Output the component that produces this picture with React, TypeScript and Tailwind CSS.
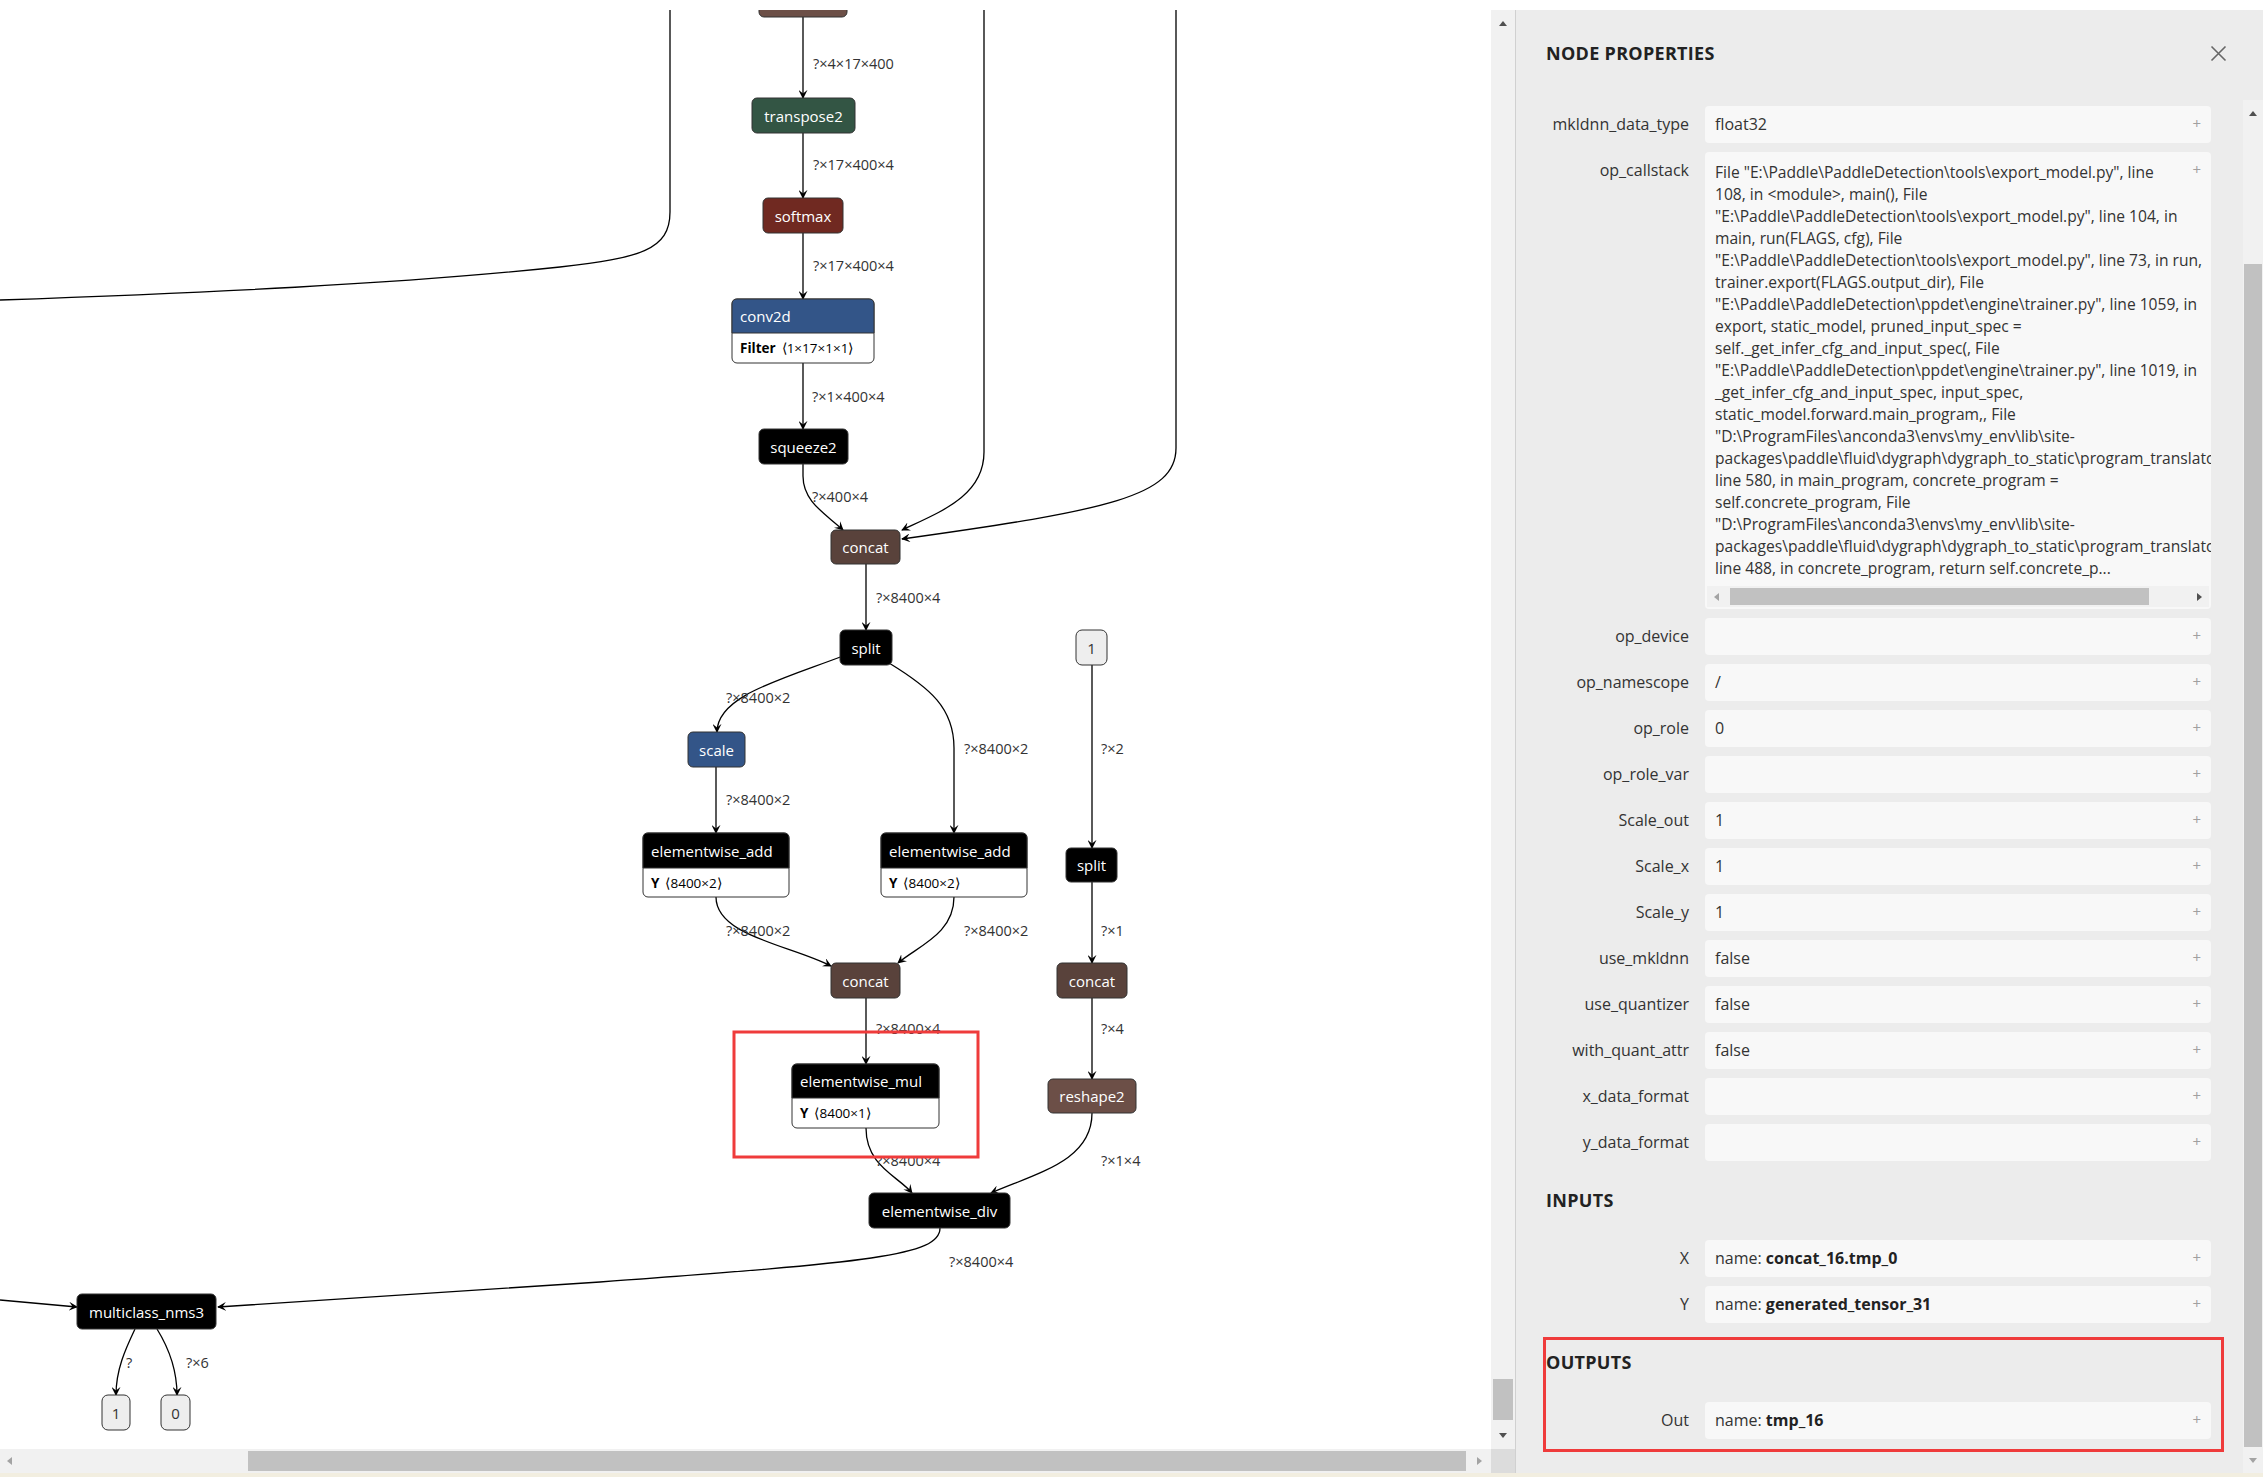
import React from "react";

// layout numbers are page pixels measured from the reference
type GNode = {
  x: number;
  y: number;
  w: number;
  h: number;
  label: string;
  fill: string;
  attr?: [string, string];
  bodyH?: number;
};

const NODES: GNode[] = [
  { x: 759, y: -20, w: 88, h: 37, label: "", fill: "#6c4f47" },
  { x: 752, y: 98, w: 103, h: 35, label: "transpose2", fill: "#335544" },
  { x: 763, y: 198, w: 80, h: 35, label: "softmax", fill: "#702921" },
  { x: 732, y: 299, w: 142, h: 34, label: "conv2d", fill: "#335588", attr: ["Filter", "⟨1×17×1×1⟩"], bodyH: 30 },
  { x: 759, y: 429, w: 89, h: 35, label: "squeeze2", fill: "#000000" },
  { x: 831, y: 530, w: 69, h: 34, label: "concat", fill: "#59423b" },
  { x: 840, y: 630, w: 52, h: 35, label: "split", fill: "#000000" },
  { x: 688, y: 732, w: 57, h: 35, label: "scale", fill: "#335588" },
  { x: 643, y: 833, w: 146, h: 35, label: "elementwise_add", fill: "#000000", attr: ["Y", "⟨8400×2⟩"], bodyH: 29 },
  { x: 881, y: 833, w: 146, h: 35, label: "elementwise_add", fill: "#000000", attr: ["Y", "⟨8400×2⟩"], bodyH: 29 },
  { x: 1066, y: 848, w: 51, h: 34, label: "split", fill: "#000000" },
  { x: 831, y: 963, w: 69, h: 35, label: "concat", fill: "#59423b" },
  { x: 1057, y: 963, w: 70, h: 35, label: "concat", fill: "#59423b" },
  { x: 792, y: 1064, w: 147, h: 34, label: "elementwise_mul", fill: "#000000", attr: ["Y", "⟨8400×1⟩"], bodyH: 30 },
  { x: 1048, y: 1079, w: 88, h: 34, label: "reshape2", fill: "#6c4f47" },
  { x: 869, y: 1193, w: 141, h: 35, label: "elementwise_div", fill: "#000000" },
  { x: 77, y: 1294, w: 139, h: 35, label: "multiclass_nms3", fill: "#000000" },
];

const CONSTS = [
  { x: 1076, y: 630, w: 31, h: 35, label: "1" },
  { x: 102, y: 1395, w: 28, h: 35, label: "1" },
  { x: 161, y: 1395, w: 29, h: 35, label: "0" },
];

const EDGES: { d: string; arrow?: boolean }[] = [
  { d: "M803 17 L803 98" },
  { d: "M803 133 L803 198" },
  { d: "M803 233 L803 299" },
  { d: "M803 363 L803 429" },
  { d: "M803 464 L803 476 C803 502 826 514 843 530" },
  { d: "M984 10 L984 452 C984 496 940 512 902 530" },
  { d: "M1176 10 L1176 448 C1176 496 1110 510 902 539" },
  { d: "M670 10 L670 212 C670 250 640 258 560 267 C400 284 200 293 0 300", arrow: false },
  { d: "M866 564 L866 630" },
  { d: "M843 656 C780 680 717 696 717 732" },
  { d: "M889 663 C930 688 954 708 954 748 L954 833" },
  { d: "M1092 665 L1092 848" },
  { d: "M716 767 L716 833" },
  { d: "M716 897 C716 936 790 945 831 966" },
  { d: "M954 897 C954 934 918 946 898 963" },
  { d: "M1092 882 L1092 963" },
  { d: "M866 998 L866 1064" },
  { d: "M1092 998 L1092 1079" },
  { d: "M866 1128 C866 1166 898 1176 912 1193" },
  { d: "M1092 1113 C1092 1160 1040 1172 991 1193" },
  { d: "M940 1228 C940 1256 870 1262 600 1282 L218 1307" },
  { d: "M0 1300 L77 1307" },
  { d: "M135 1329 C125 1350 116 1370 116 1395" },
  { d: "M157 1329 C170 1350 177 1370 177 1395" },
];

const LABELS: [number, number, string][] = [
  [813, 63, "?×4×17×400"],
  [813, 164, "?×17×400×4"],
  [813, 265, "?×17×400×4"],
  [812, 396, "?×1×400×4"],
  [812, 496, "?×400×4"],
  [876, 597, "?×8400×4"],
  [726, 697, "?×8400×2"],
  [964, 748, "?×8400×2"],
  [1101, 748, "?×2"],
  [726, 799, "?×8400×2"],
  [726, 930, "?×8400×2"],
  [964, 930, "?×8400×2"],
  [1101, 930, "?×1"],
  [876, 1028, "?×8400×4"],
  [1101, 1028, "?×4"],
  [876, 1160, "?×8400×4"],
  [1101, 1160, "?×1×4"],
  [949, 1261, "?×8400×4"],
  [126, 1362, "?"],
  [186, 1362, "?×6"],
];

const CALLSTACK = [
  String.raw`File "E:\Paddle\PaddleDetection\tools\export_model.py", line`,
  String.raw`108, in <module>, main(), File`,
  String.raw`"E:\Paddle\PaddleDetection\tools\export_model.py", line 104, in`,
  String.raw`main, run(FLAGS, cfg), File`,
  String.raw`"E:\Paddle\PaddleDetection\tools\export_model.py", line 73, in run,`,
  String.raw`trainer.export(FLAGS.output_dir), File`,
  String.raw`"E:\Paddle\PaddleDetection\ppdet\engine\trainer.py", line 1059, in`,
  String.raw`export, static_model, pruned_input_spec =`,
  String.raw`self._get_infer_cfg_and_input_spec(, File`,
  String.raw`"E:\Paddle\PaddleDetection\ppdet\engine\trainer.py", line 1019, in`,
  String.raw`_get_infer_cfg_and_input_spec, input_spec,`,
  String.raw`static_model.forward.main_program,, File`,
  String.raw`"D:\ProgramFiles\anconda3\envs\my_env\lib\site-`,
  String.raw`packages\paddle\fluid\dygraph\dygraph_to_static\program_translator.py",`,
  String.raw`line 580, in main_program, concrete_program =`,
  String.raw`self.concrete_program, File`,
  String.raw`"D:\ProgramFiles\anconda3\envs\my_env\lib\site-`,
  String.raw`packages\paddle\fluid\dygraph\dygraph_to_static\program_translator.py",`,
  String.raw`line 488, in concrete_program, return self.concrete_p...`,
];

const ATTRS: [string, string][] = [
  ["mkldnn_data_type", "float32"],
  ["op_callstack", ""],
  ["op_device", ""],
  ["op_namescope", "/"],
  ["op_role", "0"],
  ["op_role_var", ""],
  ["Scale_out", "1"],
  ["Scale_x", "1"],
  ["Scale_y", "1"],
  ["use_mkldnn", "false"],
  ["use_quantizer", "false"],
  ["with_quant_attr", "false"],
  ["x_data_format", ""],
  ["y_data_format", ""],
];

function topRounded(x: number, y: number, w: number, h: number, r: number) {
  return `M${x} ${y + r} Q${x} ${y} ${x + r} ${y} H${x + w - r} Q${x + w} ${y} ${x + w} ${y + r} V${y + h} H${x} Z`;
}

function GraphNode({ n }: { n: GNode }) {
  const cx = n.x + n.w / 2;
  if (n.attr) {
    const total = n.h + (n.bodyH ?? 30);
    return (
      <g>
        <rect x={n.x} y={n.y} width={n.w} height={total} rx={5} fill="#fff" stroke="#333" strokeWidth={1} />
        <path d={topRounded(n.x, n.y, n.w, n.h, 5)} fill={n.fill} stroke="#333" strokeWidth={1} />
        <text x={n.x + 8} y={n.y + n.h / 2} dominantBaseline="central" fill="#fff" fontSize={15}>
          {n.label}
        </text>
        <text x={n.x + 8} y={n.y + n.h + (n.bodyH ?? 30) / 2} dominantBaseline="central" fill="#000" fontSize={13.5}>
          <tspan fontWeight={700}>{n.attr[0]}</tspan>
          <tspan dx={6}>{n.attr[1]}</tspan>
        </text>
      </g>
    );
  }
  return (
    <g>
      <rect x={n.x} y={n.y} width={n.w} height={n.h} rx={5} fill={n.fill} stroke="#333" strokeWidth={1} />
      <text x={cx} y={n.y + n.h / 2} textAnchor="middle" dominantBaseline="central" fill="#fff" fontSize={15}>
        {n.label}
      </text>
    </g>
  );
}

function Graph() {
  return (
    <svg width={1491} height={1439} viewBox="0 10 1491 1439" className="block">
      <defs>
        <marker id="arr" viewBox="0 0 10 10" refX={9} refY={5} markerWidth={9} markerHeight={9} markerUnits="userSpaceOnUse" orient="auto">
          <path d="M0 0 L10 5 L0 10 L4 5 Z" fill="#000" />
        </marker>
      </defs>
      {EDGES.map((e, i) => (
        <path key={i} d={e.d} fill="none" stroke="#000" strokeWidth={1.3} markerEnd={e.arrow === false ? undefined : "url(#arr)"} />
      ))}
      {LABELS.map(([x, y, t], i) => (
        <text key={i} x={x} y={y} dominantBaseline="central" fontSize={14.5} fill="#333">
          {t}
        </text>
      ))}
      {NODES.map((n, i) => (
        <GraphNode key={i} n={n} />
      ))}
      {CONSTS.map((c, i) => (
        <g key={i}>
          <rect x={c.x} y={c.y} width={c.w} height={c.h} rx={6} fill="#eeeeee" stroke="#333" strokeWidth={1} />
          <text x={c.x + c.w / 2} y={c.y + c.h / 2} textAnchor="middle" dominantBaseline="central" fontSize={15} fill="#333">
            {c.label}
          </text>
        </g>
      ))}
      <rect x={734} y={1032} width={244} height={125} fill="none" stroke="#ef3b3b" strokeWidth={3} />
    </svg>
  );
}

function Tri({ dir, color }: { dir: "up" | "down" | "left" | "right"; color: string }) {
  const d = {
    up: "M1 8 L5 3 L9 8 Z",
    down: "M1 3 L5 8 L9 3 Z",
    left: "M7 1 L2 5 L7 9 Z",
    right: "M3 1 L8 5 L3 9 Z",
  }[dir];
  return (
    <svg width={10} height={10} viewBox="0 0 10 10">
      <path d={d} fill={color} />
    </svg>
  );
}

function Plus() {
  return <span className="absolute right-[10px] top-[6px] text-[15px] leading-[22px] text-[#a0a0a0]">+</span>;
}

function AttrRow({ label, value }: { label: string; value: string }) {
  const stack = label === "op_callstack";
  return (
    <div className="flex items-start">
      <div className="w-[143px] shrink-0 pt-[7px] text-right text-[16px] leading-[22px] text-[#333]">{label}</div>
      {stack ? (
        <div className="relative ml-[16px] w-[506px] rounded-[4px] bg-[#f8f8f8]">
          <div className="overflow-hidden whitespace-pre pl-[10px] pt-[9px] text-[15.6px] leading-[22px] text-[#333]">
            {CALLSTACK.map((l, i) => (
              <div key={i}>{l}</div>
            ))}
          </div>
          <Plus />
          <div className="mx-[2px] mb-[2px] mt-[7px] flex h-[21px] items-center bg-[#f1f1f1]">
            <div className="flex w-[20px] justify-center">
              <Tri dir="left" color="#a3a3a3" />
            </div>
            <div className="ml-[3px] h-[17px] w-[419px] bg-[#c1c1c1]" />
            <div className="flex-1" />
            <div className="flex w-[20px] justify-center">
              <Tri dir="right" color="#505050" />
            </div>
          </div>
        </div>
      ) : (
        <div className="relative ml-[16px] h-[37px] w-[506px] rounded-[4px] bg-[#f8f8f8] pl-[10px] pt-[7px] text-[16px] leading-[22px] text-[#333]">
          {value}
          <Plus />
        </div>
      )}
    </div>
  );
}

function NameRow({ label, name }: { label: string; name: string }) {
  return (
    <div className="flex items-start">
      <div className="w-[143px] shrink-0 pt-[7px] text-right text-[16px] leading-[22px] text-[#333]">{label}</div>
      <div className="relative ml-[16px] h-[37px] w-[506px] rounded-[4px] bg-[#f8f8f8] pl-[10px] pt-[7px] text-[16px] leading-[22px] text-[#333]">
        name: <span className="font-bold text-[#222]">{name}</span>
        <Plus />
      </div>
    </div>
  );
}

function Panel() {
  return (
    <div className="relative flex flex-1 flex-col border-l border-[#d0d0d0] bg-[#ececec]">
      <div className="flex h-[90px] shrink-0 items-start justify-between pl-[30px] pr-[36px] pt-[32px]">
        <h2 className="text-[18px] font-bold leading-[22px] tracking-[0.3px] text-[#222]">NODE PROPERTIES</h2>
        <svg width={17} height={17} viewBox="0 0 17 17" className="mt-[3px]">
          <path d="M1.5 1.5 L15.5 15.5 M15.5 1.5 L1.5 15.5" stroke="#666" strokeWidth={1.6} />
        </svg>
      </div>
      <div className="flex flex-1">
        <div className="flex flex-1 flex-col pl-[30px] pt-[6px]">
          <div className="flex flex-col gap-[9px]">
            {ATTRS.map(([l, v]) => (
              <AttrRow key={l} label={l} value={v} />
            ))}
          </div>
          <h3 className="mb-[29px] mt-[28px] text-[18px] font-bold leading-[22px] tracking-[0.3px] text-[#222]">INPUTS</h3>
          <div className="flex flex-col gap-[9px]">
            <NameRow label="X" name="concat_16.tmp_0" />
            <NameRow label="Y" name="generated_tensor_31" />
          </div>
          <h3 className="mb-[29px] mt-[28px] text-[18px] font-bold leading-[22px] tracking-[0.3px] text-[#222]">OUTPUTS</h3>
          <NameRow label="Out" name="tmp_16" />
        </div>
        <div className="flex w-[20px] flex-col bg-[#f1f1f1]">
          <div className="flex h-[26px] items-center justify-center">
            <Tri dir="up" color="#505050" />
          </div>
          <div className="h-[138px]" />
          <div className="mx-[1px] h-[1183px] bg-[#c1c1c1]" />
          <div className="flex flex-1 items-center justify-center">
            <Tri dir="down" color="#a3a3a3" />
          </div>
        </div>
      </div>
      <div className="pointer-events-none absolute left-[27px] top-[1327px] h-[115px] w-[681px] border-[3px] border-[#ef3b3b]" />
    </div>
  );
}

export default function App() {
  return (
    <div className="flex h-[1477px] w-[2263px] flex-col overflow-hidden bg-white font-['Open_Sans',sans-serif]">
      <div className="h-[10px] shrink-0" />
      <div className="flex h-[1463px]">
        <div className="flex w-[1515px] flex-col">
          <div className="flex h-[1439px]">
            <div className="w-[1491px] overflow-hidden bg-white">
              <Graph />
            </div>
            <div className="flex w-[24px] flex-col bg-[#f1f1f1]">
              <div className="flex h-[26px] items-center justify-center">
                <Tri dir="up" color="#505050" />
              </div>
              <div className="flex-1" />
              <div className="mx-[2px] h-[41px] bg-[#c1c1c1]" />
              <div className="flex h-[29px] items-center justify-center">
                <Tri dir="down" color="#505050" />
              </div>
            </div>
          </div>
          <div className="flex h-[24px]">
            <div className="flex w-[1491px] items-center bg-[#f1f1f1]">
              <div className="flex w-[20px] justify-center">
                <Tri dir="left" color="#a3a3a3" />
              </div>
              <div className="ml-[228px] h-[20px] w-[1218px] bg-[#c1c1c1]" />
              <div className="flex flex-1 justify-center">
                <Tri dir="right" color="#a3a3a3" />
              </div>
            </div>
            <div className="w-[24px] bg-[#dcdcdc]" />
          </div>
        </div>
        <Panel />
      </div>
      <div className="h-[4px] shrink-0 bg-[#f2eee0]" />
    </div>
  );
}
